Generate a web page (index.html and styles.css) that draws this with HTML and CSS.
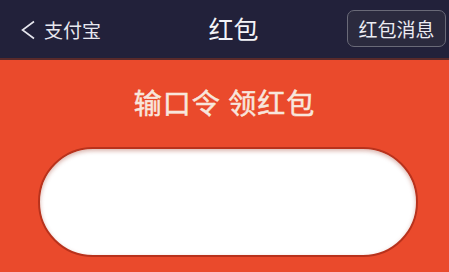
FILE: index.html
```html
<!DOCTYPE html>
<html lang="zh">
<head>
<meta charset="utf-8">
<link rel="stylesheet" href="styles.css">
</head>
<body>
<div class="page">
  <header class="nav">
    <div class="back">
      <svg class="chev" width="14" height="20" viewBox="0 0 14 20"><path d="M13 1.5 L1.5 10 L13 18.5" fill="none" stroke="#e6e6ee" stroke-width="1.6"/></svg>
      <span class="back-text">支付宝</span>
    </div>
    <div class="title">红包</div>
    <div class="right"><span class="msg-btn">红包消息</span></div>
  </header>
  <main class="body">
    <h1 class="heading">输口令 领红包</h1>
    <div class="pill"></div>
  </main>
</div>
</body>
</html>
```
FILE: styles.css
```css
* { box-sizing: border-box; }
html, body { margin: 0; padding: 0; }
body {
  width: 449px; height: 272px; overflow: hidden;
  font-family: "Noto Sans CJK SC", "Noto Sans", sans-serif;
  background: #ea4a2c;
}
.page { display: flex; flex-direction: column; height: 272px; }
.nav {
  height: 60px;
  background: #22213a;
  border-bottom: 2px solid #5a2a2a;
  display: grid;
  grid-template-columns: 1fr auto 1fr;
  align-items: center;
  padding: 0 3px 0 21px;
}
.back { display: flex; align-items: center; gap: 9px; color: #e8e8ef; }
.chev { display: block; margin-top: 1px; }
.back-text { font-size: 19px; line-height: 1; }
.title { color: #f4f4f8; font-size: 25px; line-height: 1; padding-bottom: 2px; }
.right { display: flex; justify-content: flex-end; }
.msg-btn {
  display: flex; align-items: center; justify-content: center;
  width: 99px; height: 37px;
  border: 1.5px solid #6a6a78;
  border-radius: 7px;
  background: #2b2a3e;
  color: #ececf2;
  font-size: 19px;
  margin-top: -1px;
}
.body {
  flex: 1;
  display: flex; flex-direction: column; align-items: center;
}
.heading {
  margin: 25px 0 0;
  font-size: 28px;
  font-weight: 400;
  letter-spacing: 1px;
  line-height: 34px;
  color: #f8e6dc;
  -webkit-text-stroke: 0.5px #f8e6dc;
}
.pill {
  margin-top: 28px;
  width: 380px;
  height: 110px;
  margin-left: 6px;
  border-radius: 55px;
  background: #ffffff;
  border: 2.5px solid #b8321c;
  box-shadow: inset 0 2px 4px rgba(150,40,20,0.35);
}
```
